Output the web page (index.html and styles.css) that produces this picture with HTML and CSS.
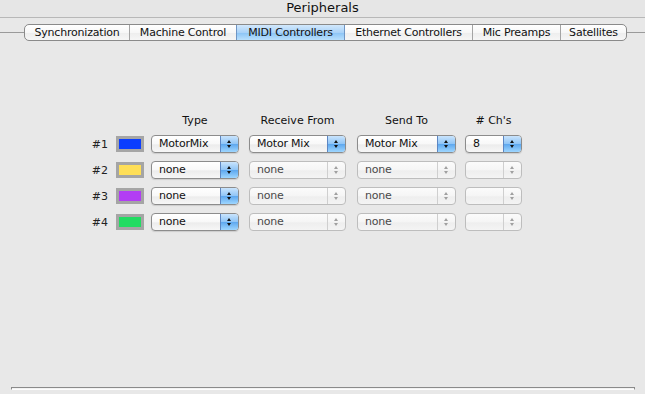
FILE: index.html
```html
<!DOCTYPE html>
<html>
	<head>
		<title>Peripherals</title>
		<link rel="stylesheet" href="styles.css">
	</head>
	<body>
		<div class="window">
			<div class="titlebar">Peripherals</div>

			<div class="tabstrip">
				<div class="tabs">
					<span class="tab">Synchronization</span>
					<span class="tab">Machine Control</span>
					<span class="tab selected">MIDI Controllers</span>
					<span class="tab">Ethernet Controllers</span>
					<span class="tab">Mic Preamps</span>
					<span class="tab">Satellites</span>
				</div>
			</div>

			<div class="pane">
				<div class="grid">
					<span></span>
					<span></span>
					<span class="head">Type</span>
					<span class="head wide">Receive From</span>
					<span class="head wider">Send To</span>
					<span class="head narrow"># Ch's</span>

					<!-- row 1 -->
					<span class="num">#1</span>
					<span class="swatch"><i class="blue"></i></span>
					<span class="popup"><b>MotorMix</b><em></em></span>
					<span class="popup wide"><b>Motor Mix</b><em></em></span>
					<span class="popup wider"><b>Motor Mix</b><em></em></span>
					<span class="popup narrow"><b>8</b><em></em></span>

					<!-- row 2 -->
					<span class="num">#2</span>
					<span class="swatch"><i class="yellow"></i></span>
					<span class="popup"><b>none</b><em></em></span>
					<span class="popup wide off"><b>none</b><em></em></span>
					<span class="popup wider off"><b>none</b><em></em></span>
					<span class="popup narrow off"><b></b><em></em></span>

					<!-- row 3 -->
					<span class="num">#3</span>
					<span class="swatch"><i class="purple"></i></span>
					<span class="popup"><b>none</b><em></em></span>
					<span class="popup wide off"><b>none</b><em></em></span>
					<span class="popup wider off"><b>none</b><em></em></span>
					<span class="popup narrow off"><b></b><em></em></span>

					<!-- row 4 -->
					<span class="num">#4</span>
					<span class="swatch"><i class="green"></i></span>
					<span class="popup"><b>none</b><em></em></span>
					<span class="popup wide off"><b>none</b><em></em></span>
					<span class="popup wider off"><b>none</b><em></em></span>
					<span class="popup narrow off"><b></b><em></em></span>
				</div>
			</div>

			<div class="rule"></div>
		</div>
	</body>
</html>
```

FILE: styles.css
```css
body
{
	margin:0;
	background:#e8e8e8;
	font-family:"DejaVu Sans", "Liberation Sans", sans-serif;
	font-size:11px;
	color:#111;
}

.window
{
	display:flex;
	flex-direction:column;
	height:394px;
}

.titlebar
{
	height:17px;
	line-height:16px;
	text-align:center;
	font-size:13px;
	border-bottom:1px solid #b8b8b8;
	background:#e6e6e6;
}

/* tab strip, line runs behind the tabs */
.tabstrip
{
	margin-top:6px;
	height:17px;
	background:linear-gradient(#9a9a9a, #9a9a9a) 0 8px / 100% 1px no-repeat;
}

.tabs
{
	display:flex;
	margin-left:24px;
	width:601px;
	height:15px;
	border:1px solid #8a8a8a;
	border-radius:5px;
	overflow:hidden;
	background:linear-gradient(#ffffff, #f7f7f7 50%, #ededed 51%, #f6f6f6);
}

.tab
{
	flex:none;
	box-sizing:border-box;
	text-align:center;
	line-height:15px;
	letter-spacing:-0.2px;
	border-left:1px solid #a4a4a4;
}

.tab:nth-child(1) { width:104px; border-left:none; }
.tab:nth-child(2) { width:107px; }
.tab:nth-child(3) { width:108px; }
.tab:nth-child(4) { width:128px; }
.tab:nth-child(5) { width:88px; }
.tab:nth-child(6) { flex:auto; }

.tab.selected
{
	background:linear-gradient(#d2e8fc, #a9d2f8 50%, #8ac3f5 51%, #b9e0fd);
	border-left-color:#6f95c4;
}

.tab.selected + .tab
{
	border-left-color:#6f95c4;
}

.pane
{
	margin-top:73px;
	padding-left:88px;
}

.grid
{
	display:grid;
	grid-template-columns:28px 35px 98px 108px 108px 57px;
	grid-template-rows:13px repeat(4, 18px);
	row-gap:8px;
	align-items:center;
}

.grid > .head
{
	width:88px;
	text-align:center;
}

.head.wide { width:97px; }
.head.wider { width:99px; }
.head.narrow { width:57px; }

.num
{
	text-align:right;
	padding-right:8px;
	color:#222;
}

.swatch
{
	width:22px;
	height:10px;
	border:3px solid #a5a5a5;
}

.swatch i
{
	display:block;
	height:100%;
}

.blue { background:#0b3dff; }
.yellow { background:#ffdf57; }
.purple { background:#b23ef4; }
.green { background:#22dc62; }

/* aqua pop-up buttons */
.popup
{
	display:flex;
	box-sizing:border-box;
	width:88px;
	height:18px;
	border:1px solid #8c8c8c;
	border-radius:4px;
	overflow:hidden;
	background:linear-gradient(#ffffff, #f8f8f8 50%, #ececec 55%, #f7f7f7);
	box-shadow:0 1px 1px rgba(0,0,0,0.12);
}

.popup.wide { width:97px; }
.popup.wider { width:99px; }
.popup.narrow { width:57px; }

.popup b
{
	flex:1;
	font-weight:normal;
	line-height:16px;
	padding-left:7px;
	letter-spacing:-0.2px;
}

.popup em
{
	position:relative;
	width:17px;
	border-left:1px solid #5d86c2;
	background:linear-gradient(#c9e4fd, #8ec4f6 50%, #5ea8ef 52%, #9ed6ff);
}

.popup em::before,
.popup em::after
{
	content:"";
	position:absolute;
	left:6px;
	border-left:2.5px solid transparent;
	border-right:2.5px solid transparent;
}

.popup em::before
{
	top:4px;
	border-bottom:3px solid #111;
}

.popup em::after
{
	top:9px;
	border-top:3px solid #111;
}

.popup.off
{
	border-color:#bdbdbd;
	box-shadow:none;
	background:linear-gradient(#fbfbfb, #f5f5f5 50%, #eeeeee 55%, #f4f4f4);
}

.popup.off b
{
	color:#4a4a4a;
}

.popup.off em
{
	border-left-color:#cfcfcf;
	background:none;
}

.popup.off em::before
{
	border-bottom-color:#a0a0a0;
}

.popup.off em::after
{
	border-top-color:#a0a0a0;
}

.rule
{
	margin:auto 10px 4px 11px;
	height:1px;
	border:1px solid #8a8a8a;
	border-bottom-color:#fdfdfd;
	background:#f2f2f2;
}
```
